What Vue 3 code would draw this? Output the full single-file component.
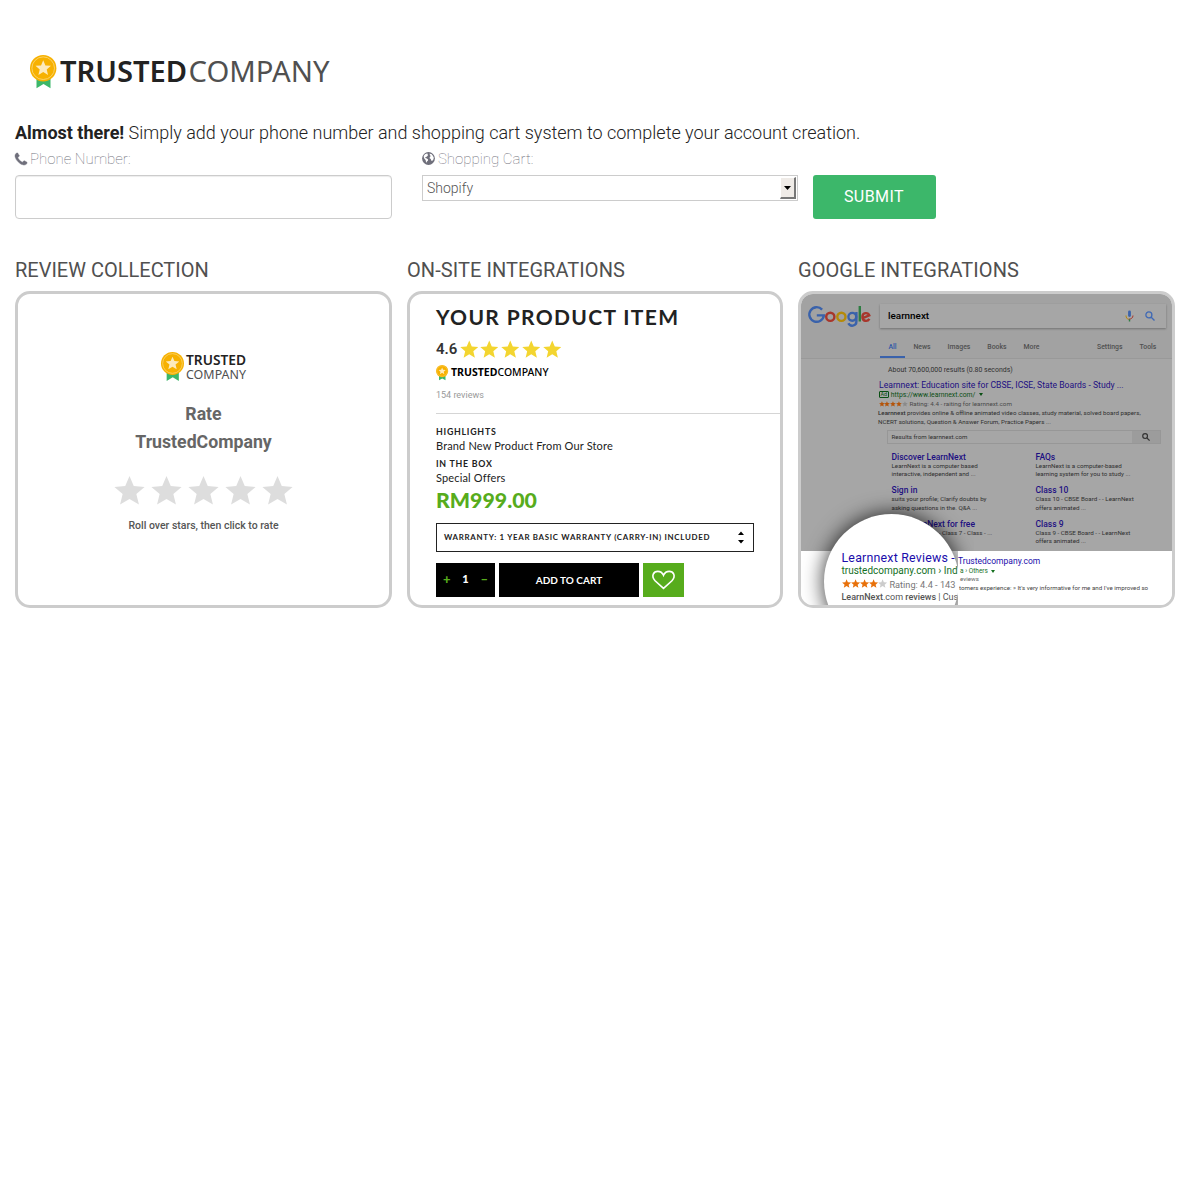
<script setup>
import { h } from 'vue'

const starPath = 'M12 0.8l3.3 7.7 8.4.7-6.4 5.5 2 8.2L12 18.5l-7.3 4.4 2-8.2L.3 9.2l8.4-.7z'

const Star = (props) =>
  h('svg', { viewBox: '0 0 24 24', width: props.size, height: props.size, fill: props.color, style: 'display:block;flex:none' }, [
    h('path', { d: starPath }),
  ])
Star.props = ['size', 'color']

const Medal = (props) =>
  h('svg', { viewBox: '0 0 27 34', width: props.width, height: (props.width * 34) / 27, style: 'display:block;flex:none' }, [
    h('path', { d: 'M6.5 23h14v10.2l-7-4.2-7 4.2z', fill: '#3cb76a' }),
    h('circle', { cx: 13.2, cy: 13.2, r: 13.2, fill: '#f7b100' }),
    h('circle', { cx: 13.2, cy: 13.2, r: 11.3, fill: 'none', stroke: '#fad980', 'stroke-width': 0.8 }),
    h('path', { d: starPath, fill: '#fdeabc', transform: 'translate(5.3 4.8) scale(.66)' }),
  ])
Medal.props = ['width']

const tabs = [
  { label: 'All', width: 25, active: true },
  { label: 'News', width: 34 },
  { label: 'Images', width: 40 },
  { label: 'Books', width: 36 },
  { label: 'More', width: 33 },
]

const sitelinks = [
  { title: 'Discover LearnNext', lines: ['LearnNext is a computer based', 'interactive, independent and ...'] },
  { title: 'FAQs', lines: ['LearnNext is a computer-based', 'learning system for you to study ...'] },
  { title: 'Sign in', lines: ['suits your profile; Clarify doubts by', 'asking questions in the. Q&A ...'] },
  { title: 'Class 10', lines: ['Class 10 - CBSE Board - - LearnNext', 'offers animated ...'] },
  { title: 'Try LearnNext for free', lines: ['Class 5 - Class 6 - Class 7 - Class - ...'] },
  { title: 'Class 9', lines: ['Class 9 - CBSE Board - - LearnNext', 'offers animated ...'] },
]
</script>

<template>
  <main class="page">
    <header class="brand">
      <Medal :width="27" />
      <svg class="wordmark" width="272" height="34" viewBox="0 0 272 34">
        <text x="0" y="27" class="wm-bold" font-size="29" textLength="127" lengthAdjust="spacingAndGlyphs">TRUSTED</text>
        <text x="128.500" y="27" class="wm-light" font-size="29" textLength="141" lengthAdjust="spacingAndGlyphs">COMPANY</text>
      </svg>
    </header>

    <p class="intro"><strong>Almost there!</strong> Simply add your phone number and shopping cart system to complete your account creation.</p>

    <form class="form" @submit.prevent>
      <div class="field phone">
        <label for="phone">
          <svg class="icon" width="12" height="12" viewBox="192 128 1408 1408" fill="#6f6f7b" stroke="#6f6f7b" stroke-width="50">
            <path d="M1600 1240q0 27-10 70.500t-21 68.500q-21 50-122 106-94 51-186 51-27 0-52.500-3.500t-57.500-12.500-47.500-14.500-55.500-20.500-49-18q-98-35-175-83-128-79-264.500-215.500t-215.500-264.500q-48-77-83-175-3-9-18-49t-20.500-55.500-14.500-47.500-12.500-57.500-3.500-52.500q0-92 51-186 56-101 106-122 25-11 68.500-21t70.500-10q14 0 21 3 18 6 53 76 11 19 30 54t35 63.500 31 53.500q3 4 17.500 25t21.500 35.500 7 28.500q0 20-28.500 50t-62 55-62 53-28.500 46q0 9 5 22.500t8.500 20.500 14 24 11.500 19q76 137 174 235t235 174q2 1 19 11.500t24 14 20.500 8.500 22.500 5q18 0 46-28.500t53-62 55-62 50-28.500q14 0 28.500 7t35.500 21.500 25 17.500q25 15 53.500 31t63.500 35 54 30q70 35 76 53 3 7 3 21z" />
          </svg>
          <span>Phone Number:</span>
        </label>
        <input id="phone" type="text" />
      </div>
      <div class="field cart">
        <label>
          <svg class="icon" width="13" height="13" viewBox="0 0 13 13">
            <circle cx="6.500" cy="6.500" r="6.400" fill="#6f6f7b" />
            <path fill="#fff" d="M1.700 4L3 2.300l1.900-.9 1.200.5-.8 1.100.8.6-1.500 1.200-1.300.5.1.8 1.400.5 1.300 1-.2 1.200-1 .8-.3 1.200-.6-.8-.4-1.900L2.400 6.800l-.5-1.300zM7.600 1.500l2.100.8 1.300 1.600.8 1.900-.4 1.700-1.300 1.500-.9-.4-.4-1.600-1.200-.7.2-1.400 1-.8-.9-.8z" />
          </svg>
          <span>Shopping Cart:</span>
        </label>
        <div class="select">
          <span>Shopify</span>
          <i class="drop"><svg width="7" height="4" viewBox="0 0 7 4"><path d="M0 0h7L3.500 4z" /></svg></i>
        </div>
      </div>
      <button class="submit" type="submit">SUBMIT</button>
    </form>

    <section class="features">
      <article>
        <h3>REVIEW COLLECTION</h3>
        <div class="card rate">
          <div class="stacked-logo">
            <Medal :width="23.500" />
            <svg width="61" height="30" viewBox="0 0 61 30">
              <text x="0" y="13.200" class="wm-bold" font-size="14" textLength="60" lengthAdjust="spacingAndGlyphs">TRUSTED</text>
              <text x="0" y="26.600" class="wm-light" font-size="13" textLength="60" lengthAdjust="spacingAndGlyphs">COMPANY</text>
            </svg>
          </div>
          <p class="rate-title">Rate<br />TrustedCompany</p>
          <div class="rate-stars"><Star v-for="n in 5" :key="n" :size="31" color="#ddd" /></div>
          <p class="rate-hint">Roll over stars, then click to rate</p>
        </div>
      </article>

      <article>
        <h3 class="wide">ON-SITE INTEGRATIONS</h3>
        <div class="card product">
          <h4>YOUR PRODUCT ITEM</h4>
          <div class="score"><b>4.6</b><Star v-for="n in 5" :key="n" :size="18.500" color="#f3d530" /></div>
          <div class="mini-logo">
            <Medal :width="12.500" />
            <svg width="99" height="14" viewBox="0 0 99 14">
              <text x="0" y="10.200" class="wm-mini" font-weight="700" font-size="10.500" textLength="46.500" lengthAdjust="spacingAndGlyphs">TRUSTED</text>
              <text x="46.500" y="10.200" class="wm-mini" font-weight="500" font-size="10.500" textLength="51" lengthAdjust="spacingAndGlyphs">COMPANY</text>
            </svg>
          </div>
          <p class="count">154 reviews</p>
          <hr />
          <h5>HIGHLIGHTS</h5>
          <p class="info">Brand New Product From Our Store</p>
          <h5 class="second">IN THE BOX</h5>
          <p class="info offers">Special Offers</p>
          <p class="price">RM999.00</p>
          <div class="warranty">
            <span>WARRANTY: 1 YEAR BASIC WARRANTY (CARRY-IN) INCLUDED</span>
            <svg width="6" height="13" viewBox="0 0 6 13"><path d="M0 4L3 .5 6 4zM0 9l3 3.500L6 9z" /></svg>
          </div>
          <div class="buy">
            <div class="qty"><i>+</i><b>1</b><i>–</i></div>
            <div class="add">ADD TO CART</div>
            <div class="like">
              <svg width="23" height="20" viewBox="0 0 24 20" fill="none" stroke="#fff" stroke-width="1.700"><path d="M12 18.800L3.200 10.800C-1.500 5.500 2 1 6 1c2.600 0 4.800 1.400 6 4 1.200-2.600 3.400-4 6-4 4 0 7.500 4.500 2.800 9.800z" /></svg>
            </div>
          </div>
        </div>
      </article>

      <article>
        <h3 class="wide">GOOGLE INTEGRATIONS</h3>
        <div class="card google">
          <div class="g-head">
            <div class="g-top">
              <svg class="g-logo" width="63" height="26" viewBox="0 0 63 26" fill="none" stroke-width="2.400">
                <path stroke="#3a62ab" d="M14.100 4.600A7.300 7.300 0 1 0 15.900 10.400H8.800" />
                <circle cx="22.300" cy="11.800" r="4.100" stroke="#a8362b" />
                <circle cx="33.400" cy="11.800" r="4.100" stroke="#b58a08" />
                <circle cx="44.300" cy="11.800" r="3.900" stroke="#3a62ab" />
                <path stroke="#3a62ab" d="M48.400 6.900v9.700c0 4.800-6.400 5.300-8 1.700" />
                <path stroke="#2d7d42" d="M51.800 1v15.600" />
                <path stroke="#a8362b" d="M54.700 13.200l6.600-2.800c-1.300-3.400-6.900-3.100-6.900 1.500 0 4.400 5 5.200 7 2" />
              </svg>
              <div class="g-search">
                <span>learnnext</span>
                <svg class="mic" width="9" height="12" viewBox="0 0 9 12" fill="none">
                  <path d="M4.500 2v3.600" stroke="#3a62ab" stroke-width="2.800" stroke-linecap="round" />
                  <path d="M1 5.500c0 2 1 3.500 2.500 3.800" stroke="#b58a08" />
                  <path d="M8 5.500C8 8 6 9.200 3.600 9.200" stroke="#a8362b" />
                  <path d="M4.500 9.200v2.300" stroke="#2d7d42" stroke-width="1.400" />
                </svg>
                <svg width="10" height="10" viewBox="0 0 10 10" fill="none" stroke="#3f69b5" stroke-width="1.300"><circle cx="3.900" cy="3.900" r="3" /><path d="M6.200 6.200l3.300 3.300" /></svg>
              </div>
            </div>
            <nav class="g-tabs">
              <span v-for="t in tabs" :key="t.label" :class="{ active: t.active }" :style="{ width: t.width + 'px' }">{{ t.label }}</span>
              <em>Settings</em>
              <em class="tools">Tools</em>
            </nav>
          </div>
          <div class="g-body">
            <p class="g-count">About 70,600,000 results (0.80 seconds)</p>
            <p class="g-title">Learnnext: Education site for CBSE, ICSE, State Boards - Study ...</p>
            <p class="g-url"><i>Ad</i><span>https://www.learnnext.com/</span><svg width="4" height="3" viewBox="0 0 4 3"><path d="M0 0h4L2 3z" fill="#0a4f14" /></svg></p>
            <p class="g-rating"><Star v-for="n in 5" :key="n" :size="5.900" :color="n < 5 ? '#b4540a' : '#8a8a8a'" /><span>Rating: 4.4 - raiting for learnnext.com</span></p>
            <p class="g-desc"><b>Learnnext</b> provides online &amp; offline animated video classes, study material, solved board papers,<br />NCERT solutions, Question &amp; Answer Forum, Practice Papers ...</p>
            <div class="g-site-search">
              <span>Results from learnnext.com</span>
              <i><svg width="8" height="8" viewBox="0 0 10 10" fill="none" stroke="#333" stroke-width="1.500"><circle cx="3.900" cy="3.900" r="3" /><path d="M6.200 6.200l3.300 3.300" /></svg></i>
            </div>
            <div class="g-links">
              <div v-for="link in sitelinks" :key="link.title">
                <strong>{{ link.title }}</strong>
                <span v-for="line in link.lines" :key="line">{{ line }}</span>
              </div>
            </div>
          </div>
          <div class="g-foot">
            <p class="f-title">Trustedcompany.com</p>
            <p class="f-url">a › Others <svg width="4" height="3" viewBox="0 0 4 3"><path d="M0 0h4L2 3z" fill="#15701f" /></svg></p>
            <p class="f-small">eviews</p>
            <p class="f-text">tomers experience: » It's very informative for me and I've improved so</p>
          </div>
          <div class="lens">
            <p class="l-title">Learnnext Reviews -</p>
            <p class="l-url">trustedcompany.com › Ind</p>
            <p class="l-rating"><Star v-for="n in 5" :key="n" :size="9.200" :color="n < 5 ? '#e8710a' : '#ccc'" /><span>Rating: 4.4 - 143</span></p>
            <p class="l-text"><b>LearnNext</b>.com <b>reviews</b> | Cus</p>
          </div>
        </div>
      </article>
    </section>
  </main>
</template>

<style>
body { margin: 0; background: #fff; }
</style>

<style scoped>
* { box-sizing: border-box; }
p, h3, h4, h5 { margin: 0; }
svg { display: block; flex: none; overflow: visible; }
.page { padding: 55px 15px 0; font-family: Roboto, sans-serif; font-weight: 300; color: #222; }
.brand { display: flex; margin-left: 15px; height: 34px; gap: 3px; }
.wm-bold { font-family: 'Noto Sans', sans-serif; font-weight: 600; fill: #222; }
.wm-light { font-family: 'Noto Sans', sans-serif; font-weight: 400; fill: #505050; }
.wm-mini { font-family: 'Noto Sans', sans-serif; fill: #000; }
.intro { margin-top: 31px; font-size: 18px; line-height: 26px; letter-spacing: -.008px; white-space: nowrap; }
.intro strong { font-weight: 700; }

.form { display: flex; align-items: flex-start; height: 73px; }
.field label { display: flex; align-items: center; height: 26px; gap: 3px; font-size: 15px; font-weight: 100; color: #6f6f7b; }
.icon { margin-bottom: 1px; }
.phone { width: 377px; margin-right: 30px; }
.phone input { display: block; width: 100%; height: 44px; margin-top: 3px; border: 1px solid #ccc; border-radius: 4px; box-shadow: inset 0 1px 1px rgba(0, 0, 0, .075); outline: none; }
.cart { width: 376px; margin-right: 15px; }
.select { display: flex; align-items: center; justify-content: space-between; height: 26px; margin-top: 3px; padding: 1px 1px 1px 4px; border: 1px solid #ccc; font-size: 14px; color: #555; }
.drop { display: flex; align-items: center; justify-content: center; width: 16px; height: 22px; background: #efebe7; border: 1px solid #fff; border-right: 2px solid #777; border-bottom: 2px solid #777; }
.submit { width: 123px; height: 44px; margin-top: 29px; padding: 0 1px 2px 0; border: 0; border-radius: 3px; background: #3cb76a; color: #fff; font: 400 16px Roboto, sans-serif; letter-spacing: .45px; }

.features { display: grid; grid-template-columns: 377px 376px 377px; gap: 15px; margin-top: 38px; }
h3 { height: 34px; font-size: 20px; font-weight: 400; line-height: 26px; color: #505050; white-space: nowrap; }
h3.wide { letter-spacing: .07px; }
.card { position: relative; height: 317px; border: 3px solid #ccc; border-radius: 15px; overflow: hidden; white-space: nowrap; }

.rate { display: flex; flex-direction: column; align-items: center; padding-top: 58px; }
.stacked-logo { display: flex; gap: 1.500px; height: 30px; }
.rate-title { margin-top: 18px; font-size: 17.700px; line-height: 28px; font-weight: 700; color: #666; text-align: center; }
.rate-stars { display: flex; gap: 6px; margin-top: 19px; }
.rate-hint { margin-top: 13px; font-size: 10.500px; line-height: 14px; font-weight: 500; color: #555; }

.product { padding: 9px 0 0 26px; color: #222; }
.product h4 { font: 700 21px/27px Lato, sans-serif; letter-spacing: 1.350px; }
.score { display: flex; align-items: center; gap: 2.200px; height: 22px; margin-top: 8px; margin-bottom: 1px; }
.score b { font-size: 15px; font-weight: 600; letter-spacing: -.1px; margin-right: .5px; color: #333; }
.mini-logo { display: flex; align-items: center; gap: 2.500px; height: 23px; }
.count { font-size: 9px; line-height: 22px; font-weight: 400; color: #999; }
hr { height: 1px; margin: 7px 0 9px; border: 0; background: #d5d5d5; }
h5 { font: 700 8.800px/17px Lato, sans-serif; letter-spacing: .75px; }
.info { margin-top: -2px; font: 400 11px/15px Lato, sans-serif; letter-spacing: .15px; }
.second { margin-top: 2px; }
.offers { line-height: 15px; }
.price { margin-top: 1px; font: 900 21.300px/28px Lato, sans-serif; color: #57ac1c; }
.warranty { display: flex; align-items: center; justify-content: space-between; width: 318px; height: 29px; margin-top: 9px; padding: 0 9px 1px 7px; border: 1px solid #222; font: 700 7.900px Lato, sans-serif; letter-spacing: .7px; }
.buy { display: flex; gap: 4px; height: 34px; margin-top: 11px; font-family: Lato, sans-serif; font-weight: 700; color: #fff; }
.buy > div { display: flex; align-items: center; justify-content: center; background: #000; }
.buy .qty { width: 59px; justify-content: space-between; padding: 0 7px 3px; font-size: 11px; }
.qty i { font-style: normal; font-size: 13px; font-weight: 900; color: #57ac1c; }
.buy .add { width: 140px; font-size: 10px; }
.buy .like { width: 41px; background: #57ac1c; }

.google { background: #fff; color: #303030; font-weight: 400; }
.g-head { height: 65px; padding-top: 10px; background: #a2a2a2; border-bottom: 1px solid #999; }
.g-top { display: flex; height: 25px; padding-left: 7px; gap: 9px; }
.g-logo { margin-top: 1px; }
.g-search { display: flex; align-items: center; width: 286px; height: 24px; padding: 0 11px 1px 8px; background: #a6a6a6; box-shadow: 0 1px 2px rgba(0, 0, 0, .3); font-size: 9.900px; font-weight: 500; color: #000; }
.mic { margin: 0 11px 0 auto; }
.g-tabs { display: flex; height: 30px; padding-left: 79px; font-size: 6.900px; line-height: 16px; font-weight: 500; color: #505050; padding-top: 10px; }
.g-tabs span { text-align: center; }
.g-tabs .active { height: 19px; color: #2c56a8; border-bottom: 2px solid #3a62ab; }
.g-tabs em { margin-left: 49px; font-style: normal; }
.g-tabs .tools { margin-left: 17px; }
.g-body { height: 192px; padding: 4px 0 0 78px; background: #a6a6a6; }
.g-count { margin-left: 9px; font-size: 6.950px; line-height: 14px; }
.g-title { margin-top: 3px; font-size: 8.620px; line-height: 10px; color: #1d0f82; }
.g-url { display: flex; align-items: center; gap: 2px; height: 9px; font-size: 6.800px; color: #0a4f14; }
.g-url svg { margin-left: 2px; }
.g-url i { padding: 0 .5px; border: .6px solid #0a4f14; border-radius: 1px; font-size: 5.500px; line-height: 5px; font-style: normal; }
.g-rating { display: flex; align-items: center; height: 10px; margin-left: -.5px; font-size: 6.250px; color: #4a4a4a; }
.g-rating span { margin-left: 1.500px; }
.g-desc { margin-left: -1px; font-size: 6.200px; line-height: 8.600px; }
.g-desc b { font-weight: 500; }
.g-site-search { display: flex; width: 274px; height: 14px; margin: 4px 0 0 8px; border: 1px solid #979797; font-size: 6.200px; line-height: 13px; }
.g-site-search span { flex: 1; padding-left: 3.500px; }
.g-site-search i { display: flex; align-items: center; justify-content: center; width: 28px; background: #9c9c9c; }
.g-links { display: grid; grid-template-columns: 144px 144px; grid-auto-rows: 33.500px; margin: 7.500px 0 0 12.500px; }
.g-links strong, .g-links span { display: block; }
.g-links strong { font-size: 8.500px; line-height: 10px; font-weight: 500; color: #1d0f82; }
.g-links span { font-size: 6.220px; line-height: 8.600px; }
.g-foot { height: 54px; padding: 5px 0 0 157px; background: #fff; }
.f-title { font-size: 8.500px; line-height: 11px; color: #1a0dab; }
.f-url { display: flex; align-items: center; gap: 3px; height: 8px; padding-left: 2px; font-size: 6.500px; color: #15701f; }
.f-small, .f-text { font-size: 6.200px; line-height: 8.700px; color: #666; }
.f-small { padding-left: 2px; }
.f-text { padding-left: 1px; color: #444; }
.lens { position: absolute; left: 23px; top: 220px; width: 135px; height: 135px; padding: 37px 0 0 17.500px; border-radius: 50%; overflow: hidden; background: #fff; }
.google::after { content: ''; position: absolute; left: 23px; top: 220px; width: 135px; height: 135px; border-radius: 50%; box-shadow: 0 0 20px 1px rgba(0, 0, 0, .75); clip-path: path('M-40 -40H150V37H134V140H-40Z'); }
.l-title { font-size: 12.400px; line-height: 14px; letter-spacing: .2px; color: #1a0dab; }
.l-url { font-size: 10px; line-height: 12px; color: #15701f; }
.l-rating { display: flex; align-items: center; height: 14px; font-size: 9.200px; color: #777; }
.l-rating span { margin-left: 2px; }
.l-text { margin-top: -.5px; font-size: 9px; line-height: 12px; color: #555; }
.l-text b { font-weight: 500; }
</style>
